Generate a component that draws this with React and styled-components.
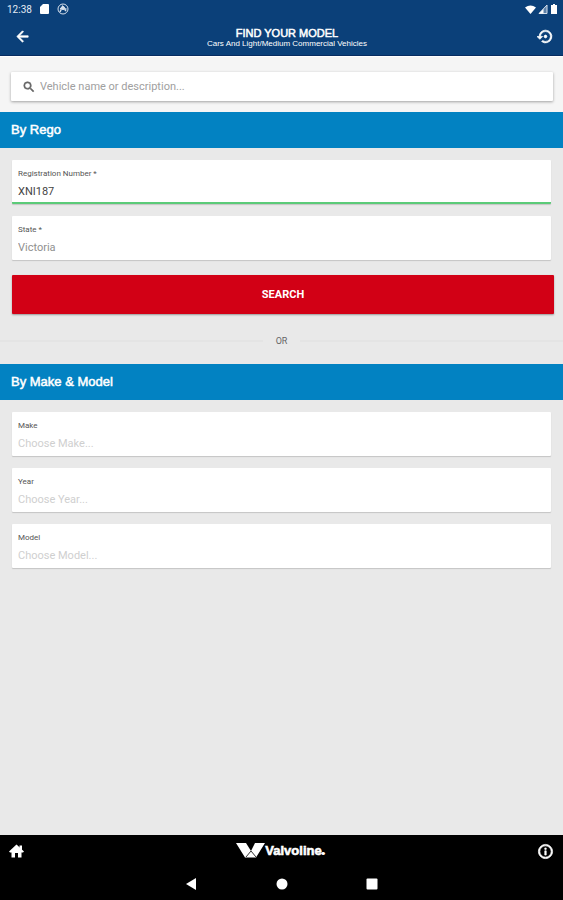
import React from "react";
import styled, { createGlobalStyle } from "styled-components";
import {
  MdArrowBack,
  MdInfoOutline,
  MdSearch,
  MdSettingsBackupRestore,
} from "react-icons/md";

const GlobalStyle = createGlobalStyle`
  * {
    box-sizing: border-box;
  }
  body {
    margin: 0;
    font-family: Roboto, sans-serif;
    background: #e9e9e9;
  }
  h1, h2, p {
    margin: 0;
  }
  svg {
    display: block;
  }
`;

const PageStyles = styled.div`
  display: flex;
  flex-direction: column;
  min-height: 100vh;
`;

const HeaderStyles = styled.header`
  background: #0b4079;
  color: #fff;
  border-bottom: 1px solid #082c61;
`;

const StatusBar = styled.div`
  display: flex;
  align-items: center;
  justify-content: space-between;
  height: 18px;
  padding: 0 5px 0 7px;
  color: #e4ebf3;
  font-size: 10px;
  .group {
    display: flex;
    align-items: center;
    gap: 8px;
  }
  .signals {
    gap: 2px;
  }
`;

const TitleBar = styled.div`
  display: flex;
  align-items: center;
  justify-content: space-between;
  height: 37px;
  padding: 0 9px 0 14px;
`;

const Title = styled.div`
  padding: 2px 0 0 6px;
  font-family: "Liberation Sans", sans-serif;
  text-align: center;
  h1 {
    font-size: 11px;
    line-height: 12px;
    font-weight: 400;
    -webkit-text-stroke: 0.5px #fff;
  }
  p {
    font-size: 8px;
    line-height: 9px;
  }
`;

const IconButton = styled.button`
  display: flex;
  padding: 0;
  border: 0;
  background: none;
  color: #fff;
  font-size: 17px;
  .heavy path:not([fill="none"]) {
    stroke: #fff;
    stroke-width: 1px;
  }
`;

const SearchArea = styled.div`
  padding: 15px 10px 11px 11px;
  background: #f5f5f5;
  border-top: 1px solid #fff;
`;

const SearchBox = styled.label`
  display: flex;
  align-items: center;
  gap: 4px;
  height: 29px;
  padding: 0 11px;
  border-radius: 1px;
  background: #fff;
  box-shadow: 0 1px 3px rgba(0, 0, 0, 0.35);
  color: #666;
  font-size: 14px;
  svg path:not([fill="none"]) {
    stroke: #666;
    stroke-width: 1px;
  }
  input {
    flex: 1;
    min-width: 0;
    padding: 0;
    border: 0;
    outline: 0;
    background: none;
    font-family: Roboto, sans-serif;
    font-size: 11px;
    &::placeholder {
      color: #a0a0a0;
      opacity: 1;
    }
  }
`;

const SectionTitle = styled.h2`
  height: 36px;
  padding-left: 11px;
  background: #0282c2;
  color: #fff;
  font-family: "Liberation Sans", sans-serif;
  font-size: 13px;
  line-height: 36px;
  font-weight: 400;
  -webkit-text-stroke: 0.5px #fff;
`;

const Fields = styled.div`
  display: flex;
  flex-direction: column;
  gap: 12px;
  padding: 12px 12px 0;
`;

const FieldStyles = styled.label`
  display: block;
  height: 44px;
  padding: 8px 6px 0;
  border-radius: 1px;
  background: #fff;
  border-bottom: ${(props) => (props.$active ? "2px solid #5bcb78" : "0")};
  box-shadow: 0 1px 1px rgba(0, 0, 0, 0.16);
  span {
    display: block;
    color: #555;
    font-size: 8px;
    line-height: 12px;
  }
  input,
  select {
    display: block;
    width: 100%;
    height: 22px;
    padding: 0;
    border: 0;
    outline: 0;
    appearance: none;
    background: none;
    color: ${(props) => props.$color};
    font-family: Roboto, sans-serif;
    font-size: 11px;
  }
`;

const SearchButton = styled.button`
  height: 39px;
  margin: 15px 9px 0 12px;
  border: 0;
  border-radius: 1px;
  background: #d20015;
  box-shadow: 0 1px 2px rgba(0, 0, 0, 0.35);
  color: #fff;
  font-family: Roboto, sans-serif;
  font-size: 11px;
  font-weight: 700;
`;

const Divider = styled.div`
  display: flex;
  align-items: center;
  gap: 13px;
  height: 50px;
  padding-top: 4px;
  color: #666;
  font-size: 9px;
  &::before,
  &::after {
    content: "";
    flex: 1;
    height: 2px;
    background: #e4e4e4;
  }
`;

const FooterStyles = styled.footer`
  margin-top: auto;
  background: #000;
  color: #fff;
`;

const TabBar = styled.div`
  display: flex;
  align-items: center;
  justify-content: space-between;
  height: 32px;
  padding: 0 9px;
`;

const Logo = styled.div`
  display: flex;
  align-items: center;
  font-family: "Liberation Sans", sans-serif;
  font-size: 13px;
  line-height: 16px;
  font-weight: 700;
  -webkit-text-stroke: 0.6px #fff;
  span {
    padding-top: 2px;
  }
  small {
    font-size: 4px;
  }
`;

const SystemBar = styled.nav`
  display: flex;
  align-items: center;
  justify-content: center;
  gap: 78px;
  height: 33px;
`;

const Field = ({ label, value, color, active, select }) => (
  <FieldStyles $color={color} $active={active}>
    <span>{label}</span>
    {select ? (
      <select defaultValue={value}>
        <option>{value}</option>
      </select>
    ) : (
      <input type="text" defaultValue={value} />
    )}
  </FieldStyles>
);

const Header = () => (
  <HeaderStyles>
    <StatusBar>
      <div className="group">
        <span>12:38</span>
        <svg width="9" height="10" viewBox="0 0 9 10" fill="#fff">
          <path d="M3 0h5q1 0 1 1v8q0 1-1 1H1q-1 0-1-1V3z" />
        </svg>
        <svg width="12" height="12" viewBox="0 0 12 12" fill="none" stroke="#d5dfeb">
          <circle cx="6" cy="6" r="5" />
          <path d="M3 9 5.5 3.5 9 8M3 5.5 9.5 6" strokeWidth="1.5" />
          <circle cx="6" cy="5" r="1.5" fill="#d5dfeb" />
        </svg>
      </div>
      <div className="group signals">
        <svg width="11" height="9" viewBox="0 0 11 9" fill="#fff">
          <path d="M0 2.5Q5.5-1.5 11 2.5L5.5 9z" />
        </svg>
        <svg width="10" height="10" viewBox="0 0 10 10">
          <path d="M1 9.5 9 1v8.5z" fill="#5c80a8" stroke="#d5dfeb" />
          <path d="M1 9.5 5.5 5v4.5z" fill="#fff" />
        </svg>
        <svg width="8" height="10" viewBox="0 0 8 10" fill="#fff">
          <path d="M3 0h2v1h2v9H1V1h2z" />
        </svg>
      </div>
    </StatusBar>
    <TitleBar>
      <IconButton aria-label="Back">
        <MdArrowBack className="heavy" />
      </IconButton>
      <Title>
        <h1>FIND YOUR MODEL</h1>
        <p>Cars And Light/Medium Commercial Vehicles</p>
      </Title>
      <IconButton aria-label="History">
        <MdSettingsBackupRestore className="heavy" />
      </IconButton>
    </TitleBar>
  </HeaderStyles>
);

const Footer = () => (
  <FooterStyles>
    <TabBar>
      <IconButton aria-label="Home">
        <svg width="15" height="14" viewBox="0 0 15 14" fill="#fff">
          <path d="M7.5 0.5 15 7.5 14 8.5h-1.5v5H9V9H6v4.5H2.5v-5H1L0 7.5z" />
          <path d="M10.500 1.500h2.500v5l-2.500-2z" />
        </svg>
      </IconButton>
      <Logo>
        <svg width="29" height="16" viewBox="0 0 29 16">
          <path d="M0 0h10l5 8 4-8h10l-9 14.5H9z" fill="#fff" />
          <path d="M10 14 15 8l5 6" fill="none" stroke="#333" strokeWidth="1" />
        </svg>
        <span>
          Valvoline<small>®</small>
        </span>
      </Logo>
      <IconButton aria-label="Info">
        <MdInfoOutline className="heavy" />
      </IconButton>
    </TabBar>
    <SystemBar>
      <IconButton aria-label="System back">
        <svg width="12" height="12" viewBox="0 0 12 12" fill="#fff">
          <path d="M0 6 10 0v12z" />
        </svg>
      </IconButton>
      <IconButton aria-label="System home">
        <svg width="12" height="12" viewBox="0 0 12 12" fill="#fff">
          <circle cx="6" cy="6" r="5.5" />
        </svg>
      </IconButton>
      <IconButton aria-label="Recent apps">
        <svg width="12" height="12" viewBox="0 0 12 12" fill="#fff">
          <rect x="0.5" y="0.5" width="11" height="11" rx="1" />
        </svg>
      </IconButton>
    </SystemBar>
  </FooterStyles>
);

const App = () => {
  return (
    <PageStyles>
      <GlobalStyle />
      <Header />
      <SearchArea>
        <SearchBox>
          <MdSearch />
          <input
            type="text"
            aria-label="Vehicle search"
            placeholder="Vehicle name or description..."
          />
        </SearchBox>
      </SearchArea>
      <SectionTitle>By Rego</SectionTitle>
      <Fields>
        <Field label="Registration Number *" value="XNI187" color="#444" active />
        <Field label="State *" value="Victoria" color="#909090" select />
      </Fields>
      <SearchButton>SEARCH</SearchButton>
      <Divider>OR</Divider>
      <SectionTitle>By Make &amp; Model</SectionTitle>
      <Fields>
        <Field label="Make" value="Choose Make..." color="#cfcfcf" select />
        <Field label="Year" value="Choose Year..." color="#cfcfcf" select />
        <Field label="Model" value="Choose Model..." color="#cfcfcf" select />
      </Fields>
      <Footer />
    </PageStyles>
  );
};

export default App;
